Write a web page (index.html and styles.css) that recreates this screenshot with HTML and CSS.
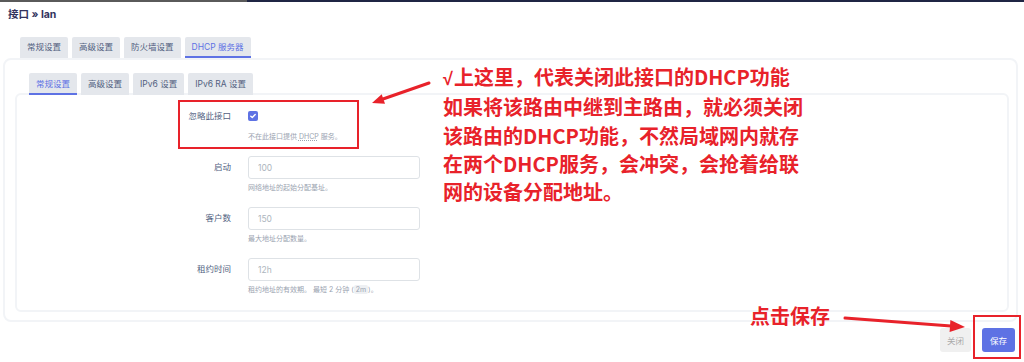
FILE: index.html
```html
<!DOCTYPE html>
<html lang="zh-CN">
<head>
<meta charset="UTF-8">
<meta name="viewport" content="width=device-width, initial-scale=1.0">
<title>接口 » lan</title>
<link rel="stylesheet" href="styles.css">
</head>
<body>
<div class="topbar"></div>
<h2 class="page-title">接口 » lan</h2>

<div class="modal">
    <ul class="tabs outer-tabs">
        <li class="tab">常规设置</li>
        <li class="tab">高级设置</li>
        <li class="tab">防火墙设置</li>
        <li class="tab active">DHCP 服务器</li>
    </ul>
    <div class="panel outer-panel">
        <ul class="tabs inner-tabs">
            <li class="tab active">常规设置</li>
            <li class="tab">高级设置</li>
            <li class="tab">IPv6 设置</li>
            <li class="tab">IPv6 RA 设置</li>
        </ul>
        <div class="panel inner-panel">
            <div class="row">
                <label class="row-label">忽略此接口</label>
                <div class="row-field">
                    <div class="control">
                        <span class="checkbox">
                            <svg width="10" height="10" viewBox="0 0 10 10"><path d="M2.8 5.2 L4.3 6.6 L7.2 3.5" fill="none" stroke="#fff" stroke-width="1.4" stroke-linecap="round" stroke-linejoin="round"/></svg>
                        </span>
                    </div>
                    <div class="help">不在此接口提供 <abbr>DHCP</abbr> 服务。</div>
                </div>
            </div>
            <div class="row">
                <label class="row-label">启动</label>
                <div class="row-field">
                    <input class="text-input" type="text" placeholder="100">
                    <div class="help">网络地址的起始分配基址。</div>
                </div>
            </div>
            <div class="row">
                <label class="row-label">客户数</label>
                <div class="row-field">
                    <input class="text-input" type="text" placeholder="150">
                    <div class="help">最大地址分配数量。</div>
                </div>
            </div>
            <div class="row">
                <label class="row-label">租约时间</label>
                <div class="row-field">
                    <input class="text-input" type="text" placeholder="12h">
                    <div class="help">租约地址的有效期。 最短 2 分钟 (<code>2m</code>)。</div>
                </div>
            </div>
        </div>
    </div>
    <div class="actions">
        <button class="btn btn-close">关闭</button>
        <button class="btn btn-save">保存</button>
    </div>
</div>

<!-- annotations drawn over the screenshot -->
<div class="mark mark-ignore"></div>
<div class="mark mark-save"></div>
<p class="note note-main"><span class="tick">√</span>上这里，代表关闭此接口的DHCP功能<br>如果将该路由中继到主路由，就必须关闭<br>该路由的DHCP功能，不然局域网内就存<br>在两个DHCP服务，会冲突，会抢着给联<br>网的设备分配地址。</p>
<p class="note note-save">点击保存</p>
<svg class="arrows" width="1024" height="362" viewBox="0 0 1024 362">
    <line x1="429" y1="83" x2="383" y2="99" stroke="#e8222a" stroke-width="3" stroke-linecap="round"/>
    <polygon points="372,103 385,103.7 381.7,94.3" fill="#e8222a"/>
    <line x1="845" y1="318" x2="951" y2="326" stroke="#e8222a" stroke-width="3" stroke-linecap="round"/>
    <polygon points="965,327 949.6,332 950.4,320" fill="#e8222a"/>
</svg>
</body>
</html>
```

FILE: styles.css
```css
body {
    margin: 0;
    background: #fff;
    font-family: Inter, "Noto Sans CJK SC", sans-serif;
    color: #32325d;
    position: relative;
    width: 1024px;
    height: 362px;
    overflow: hidden;
}

.topbar {
    height: 2px;
    background: linear-gradient(to right, #5a5a5a 0, #5a5a5a 247px, #1f2544 247px, #1f2544 100%);
}

.page-title {
    margin: 6px 0 0 8px;
    font-size: 10.5px;
    line-height: 14px;
    font-weight: 700;
    color: #32325d;
}

.modal {
    margin-top: 15px;
}

.tabs {
    list-style: none;
    margin: 0;
    padding: 0;
    display: flex;
    gap: 4px;
}

.tab {
    height: 21px;
    line-height: 21px;
    padding: 0 7px;
    background: #e4e7ec;
    color: #525f7f;
    font-size: 8.5px;
    white-space: nowrap;
    box-sizing: border-box;
    border-radius: 2px 2px 0 0;
}

.tab.active {
    color: #5e72e4;
    border-bottom: 2px solid #5e72e4;
}

.outer-tabs {
    padding-left: 20px;
}

.panel {
    border: 2px solid #f2f4f7;
    border-radius: 8px;
    background: #fff;
}

.outer-panel {
    margin: 0 6px 0 3px;
    padding: 13px 7px 8px 10px;
}

.inner-tabs {
    margin-left: 14px;
    height: 22px;
    position: relative;
    z-index: 1;
}

.inner-tabs .tab {
    height: 22px;
    line-height: 22px;
}

.inner-panel {
    margin-top: -2px;
    padding: 10px 0 1px 0;
    border-radius: 6px;
}

.row {
    display: flex;
    gap: 17px;
    margin-bottom: 14px;
}

.row-label {
    width: 214px;
    text-align: right;
    font-size: 8.5px;
    line-height: 23px;
    color: #525f7f;
}

.control {
    height: 23px;
    display: flex;
    align-items: center;
}

.checkbox {
    width: 10px;
    height: 10px;
    border-radius: 2px;
    background: #5e72e4;
    display: block;
    margin-top: -1px;
}

.checkbox svg {
    display: block;
}

.text-input {
    display: block;
    width: 172px;
    height: 23px;
    box-sizing: border-box;
    border: 1px solid #dee2e6;
    border-radius: 3px;
    padding: 0 9px;
    font-family: Inter, "Noto Sans CJK SC", sans-serif;
    font-size: 8.5px;
    color: #525f7f;
    background: #fff;
}

.text-input::placeholder {
    color: #adb5bd;
}

.help {
    margin-top: 4px;
    font-size: 7px;
    line-height: 10px;
    color: #9aa3b0;
}

.help abbr {
    text-decoration: underline dotted;
}

.help code {
    font-family: Inter, "Noto Sans CJK SC", sans-serif;
    background: #eef0f3;
    border-radius: 2px;
    padding: 0 2px;
}

.actions {
    display: flex;
    justify-content: flex-end;
    gap: 11px;
    margin: 6px 9px 0 0;
}

.btn {
    height: 24px;
    padding: 0 7px;
    border: none;
    border-radius: 3px;
    font-family: Inter, "Noto Sans CJK SC", sans-serif;
    font-size: 8.5px;
}

.btn-close {
    background: #f0f0f0;
    color: #aaa;
}

.btn-save {
    background: #5e72e4;
    color: #fff;
    width: 33px;
}

/* annotations */
.mark {
    position: absolute;
    border: 2px solid #e8222a;
    box-sizing: border-box;
}

.mark-ignore {
    left: 178px;
    top: 100px;
    width: 181px;
    height: 49px;
}

.mark-save {
    left: 973px;
    top: 315px;
    width: 48px;
    height: 44px;
}

.note {
    position: absolute;
    margin: 0;
    color: #e8222a;
    font-family: "Noto Sans CJK SC", sans-serif;
    font-weight: 700;
    font-size: 20px;
    line-height: 28.3px;
    white-space: nowrap;
}

.note .tick {
    font-family: "Liberation Sans", sans-serif;
    font-size: 18px;
    margin-right: 1px;
}

.note-main {
    left: 443px;
    top: 63px;
}

.note-save {
    left: 750px;
    top: 302px;
}

.arrows {
    position: absolute;
    left: 0;
    top: 0;
    pointer-events: none;
}
```
